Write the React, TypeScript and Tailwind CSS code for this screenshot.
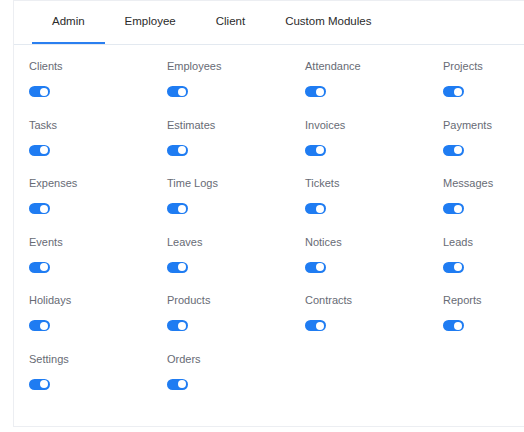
const tabs = ["Admin", "Employee", "Client", "Custom Modules"];

const modules = [
  "Clients", "Employees", "Attendance", "Projects",
  "Tasks", "Estimates", "Invoices", "Payments",
  "Expenses", "Time Logs", "Tickets", "Messages",
  "Events", "Leaves", "Notices", "Leads",
  "Holidays", "Products", "Contracts", "Reports",
  "Settings", "Orders",
];

function Toggle() {
  return (
    <span className="relative mt-[13px] flex h-[11px] w-[21px] items-center rounded-full bg-[#1f7cf2]">
      <span className="absolute right-[2px] h-[8px] w-[8px] rounded-full bg-white" />
    </span>
  );
}

export default function App() {
  return (
    <div className="h-[432px] w-[524px] overflow-hidden bg-white font-['Liberation_Sans',Arial,sans-serif]">
      <div className="ml-[13px] h-[427px] border-b border-l border-t border-[#eceef2]">
        <div className="flex h-[44px] border-b border-[#e3e9f0] pl-[18px]">
          {tabs.map((t, i) => (
            <div
              key={t}
              className={
                i === 0
                  ? "flex h-full items-center border-b-2 border-[#2a7ff0] px-5 pt-[1px] text-[11.5px] text-[#2b2b2b]"
                  : "flex h-full items-center px-5 pb-[1px] text-[11.5px] text-[#2b2b2b]"
              }
            >
              {t}
            </div>
          ))}
        </div>
        <div className="grid grid-cols-[repeat(4,138px)] gap-y-[20.6px] pl-[15px] pt-[14px]">
          {modules.map((m) => (
            <div key={m} className="flex flex-col items-start">
              <span className="h-[14px] text-[11px] leading-[14px] text-[#676b75]">{m}</span>
              <Toggle />
            </div>
          ))}
        </div>
      </div>
    </div>
  );
}
